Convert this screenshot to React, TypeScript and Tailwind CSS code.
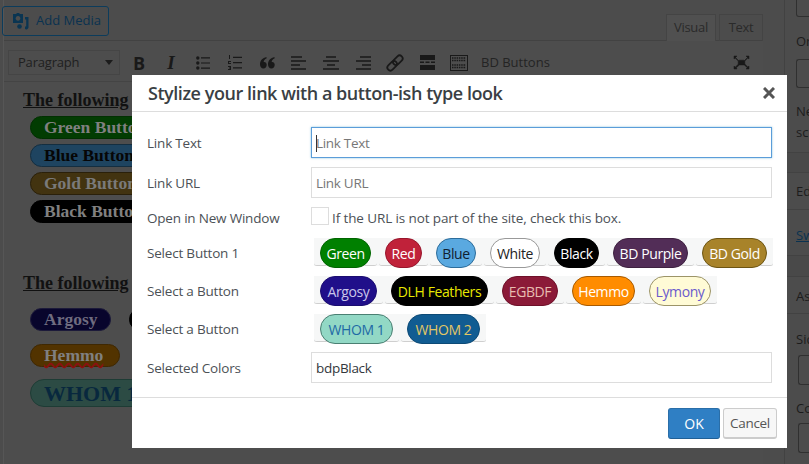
import React from "react";

const ui = "font-['Open_Sans','Noto_Sans',sans-serif]";
const serif = "font-['Liberation_Serif',serif]";

const Pill = ({ text, cls, w }: { text: string; cls: string; w: string }) => (
  <span className={`flex h-[30px] shrink-0 items-center justify-center rounded-[15px] border text-[14px] tracking-[-0.4px] ${cls} ${w}`}>{text}</span>
);

const Wrap = ({ children }: { children: React.ReactNode }) => (
  <span className="flex h-[28px] items-start rounded-b-[3px] border-b border-[#cfcfcf] px-[6px]">{children}</span>
);

const BackPill = ({ text, cls, w, big }: { text: string; cls: string; w: string; big?: boolean }) => (
  <div className={`flex items-center whitespace-nowrap border pl-[13px] ${serif} font-bold ${big ? "h-[28px] rounded-[14px] text-[22px]" : "h-[23px] rounded-[12px] text-[17.5px]"} ${cls} ${w}`}>{text}</div>
);

const Icon = ({ children }: { children: React.ReactNode }) => (
  <span className="flex h-5 w-8 items-center justify-center text-[#191919]">{children}</span>
);

const Row = ({ label, children, h, nudge }: { label: string; children: React.ReactNode; h: string; nudge?: boolean }) => (
  <div className={`flex items-center ${h}`}>
    <span className={`w-[164px] shrink-0 whitespace-nowrap text-[13.5px] tracking-[-0.2px] text-[#4c5156] ${nudge ? "pt-[2px]" : ""}`}>{label}</span>
    {children}
  </div>
);

const ButtonRow = ({ children }: { children: React.ReactNode }) => (
  <div className="ml-[3px] flex h-[28px] gap-[2px] self-start bg-[#f6f7f7]">{children}</div>
);

function SideLabel({ t, cls = "" }: { t: string; cls?: string }) {
  return <div className={`text-[13px] text-[#1c1c1c] ${cls}`}>{t}</div>;
}

const Align = ({ d }: { d: string }) => (
  <svg width="16" height="14" viewBox="0 0 16 14" stroke="currentColor" strokeWidth="1.6" fill="none">
    <path d={d} />
  </svg>
);

export default function App() {
  return (
    <div className={`relative flex h-[464px] w-[809px] overflow-hidden bg-[#4c4c4c] ${ui}`}>
      {/* page beneath */}
      <div className="ml-[3px] flex w-[760px] shrink-0 flex-col border-l border-[#565656]">
        <div className="flex h-[41px] items-start justify-between border-b border-[#424242]">
          <button className="-ml-[2px] mt-[6px] flex h-[30px] w-[107px] items-center gap-[7px] rounded-[3px] border border-[#0c3c5c] pl-[10px] text-[13px] text-[#0a3250]">
            <svg width="16" height="17" viewBox="0 0 16 17" fill="#0a3552">
              <path d="M0 1h3l1-1h2l1 1h3v9H0zM5 3a2.4 2.4 0 1 0 .01 0z" fillRule="evenodd" />
              <circle cx="6.5" cy="13.5" r="2.3" />
              <path d="M12 4h3.500v10.500a2.300 2.300 0 0 1-3.500 1.500v-2.500h1.200V6.500H12z" />
            </svg>
            Add Media
          </button>
          <div className="mt-[14px] flex h-[27px] text-[13px] tracking-[-0.3px] text-[#2a2a2a]">
            <span className="flex w-[50px] items-center justify-center border-x border-t border-[#444] bg-[#505050]">Visual</span>
            <span className="ml-[3px] flex w-[44px] items-center justify-center border-x border-t border-[#444]">Text</span>
          </div>
        </div>
        <div className="flex h-[41px] items-center border-b border-[#444] bg-[#4d4d4d] pl-[4px] pt-[3px]">
          <div className="flex h-[25px] w-[112px] items-center justify-between border border-[#454545] pl-[9px] pr-[6px] text-[13px] tracking-[-0.2px] text-[#202020]">
            Paragraph
            <span className="h-0 w-0 border-x-[4px] border-t-[5px] border-x-transparent border-t-[#1c1c1c]" />
          </div>
          <div className="ml-[3px] flex items-center">
            <Icon><span className="text-[18px] font-bold leading-none">B</span></Icon>
            <Icon><span className={`${serif} text-[19px] font-bold italic leading-none`}>I</span></Icon>
            <Icon>
              <svg width="14" height="14" viewBox="0 0 14 14" fill="currentColor">
                <circle cx="1.800" cy="2" r="1.700" /><circle cx="1.800" cy="7" r="1.700" /><circle cx="1.800" cy="12" r="1.700" />
                <path d="M5 1.300h9v1.200H5zM5 6.400h9v1.200H5zM5 11.500h9v1.200H5z" />
              </svg>
            </Icon>
            <Icon>
              <svg width="14" height="15" viewBox="0 0 14 15" fill="currentColor">
                <path d="M1 0h1v4H1zM0 6h3v1H1v1h2v1H0zM0 11h3v4H0v-1h2v-.5H1v-1h1V12H0z" />
                <path d="M5 1.800h9V3H5zM5 7h9v1.200H5zM5 12.300h9v1.200H5z" />
              </svg>
            </Icon>
            <Icon>
              <svg width="15" height="12" viewBox="0 0 15 12" fill="currentColor">
                <path d="M6.500 0v1.600C4.700 2.300 3.800 3.500 3.700 5c1.700-.3 3 .9 3 2.800C6.700 10 5.300 11.500 3.400 11.500 1.300 11.500 0 9.800 0 7.500 0 3.600 2.600.8 6.500 0z" />
                <path d="M14.500 0v1.600c-1.800.7-2.700 1.900-2.800 3.400 1.700-.3 3 .9 3 2.800 0 2.200-1.400 3.700-3.300 3.700C9.300 11.500 8 9.800 8 7.500 8 3.600 10.600.8 14.500 0z" />
              </svg>
            </Icon>
            <Icon><Align d="M0 1h11M0 5h15M0 9h9M0 13h15" /></Icon>
            <Icon><Align d="M3 1h10M0 5h16M4 9h8M0 13h16" /></Icon>
            <Icon><Align d="M5 1h11M1 5h15M7 9h9M1 13h15" /></Icon>
            <Icon>
              <svg width="18" height="18" viewBox="-9 -9 18 18" fill="none" stroke="currentColor" strokeWidth="1.800">
                <g transform="rotate(-45)">
                  <rect x="-9.500" y="-3" width="11" height="6" rx="3" />
                  <rect x="-1.500" y="-3" width="11" height="6" rx="3" />
                </g>
              </svg>
            </Icon>
            <Icon>
              <svg width="15" height="15" viewBox="0 0 15 15" fill="currentColor">
                <path d="M0 0h15v5H0zM0 6.500h4v1.500H0zM5.500 6.500h4v1.500h-4zM11 6.500h4v1.500h-4zM0 10h15v5H0z" />
              </svg>
            </Icon>
            <Icon>
              <svg width="18" height="16" viewBox="0 0 18 16" fill="none" stroke="currentColor">
                <rect x=".5" y=".5" width="17" height="15" />
                <path d="M2 3h14M2 5.500h14M2 10h14M2 12.500h14" strokeDasharray="1.500 .8" strokeWidth="1.300" />
              </svg>
            </Icon>
            <span className="ml-[6px] text-[13px] text-[#242424]">BD Buttons</span>
          </div>
          <span className="ml-auto mr-[6px] flex w-8 justify-center text-[#191919]">
            <svg width="17" height="15" viewBox="0 0 17 15" fill="currentColor" stroke="currentColor">
              <path d="M1 1h3L2.500 2.500l3 3 1-.3h4l1 .3 3-3L13 1h3v3l-1.200-1-3 3v3l3 3L16 11v3h-3l1.300-1.300-3-2.700h-5l-3 2.700L4 14H1v-3l1.200 1.200 3-3V6l-3-3L1 4z" strokeWidth=".5" />
            </svg>
          </span>
        </div>
        <div className="flex flex-1 flex-col bg-[#4d4d4d] pl-[19px] text-[#111]">
          <div className={`mt-[5px] ${serif} text-[18px] font-bold leading-[26px] underline`}>The following</div>
          <div className="ml-[7px] mt-[3px] flex flex-col gap-[5px]">
            <BackPill text="Green Button" cls="border-[#013001] bg-[#023c02] text-[#808080]" w="w-[160px]" />
            <BackPill text="Blue Button" cls="border-[#142e40] bg-[#1e4460] text-[#060606]" w="w-[160px]" />
            <BackPill text="Gold Button" cls="border-[#2a200a] bg-[#423310] text-[#7a7a7a]" w="w-[160px]" />
            <BackPill text="Black Button" cls="border-black bg-black text-[#808080]" w="w-[160px]" />
          </div>
          <div className={`mt-[47px] ${serif} text-[18px] font-bold leading-[26px] underline`}>The following</div>
          <div className="ml-[7px] mt-[12px] flex gap-[18px]">
            <BackPill text="Argosy" cls="border-[#1c1a3a] bg-[#08052c] text-[#6f6c80]" w="w-[81px]" />
            <BackPill text="" cls="border-black bg-black" w="w-[60px]" />
          </div>
          <div className="ml-[7px] mt-[13px]">
            <BackPill text="Hemmo" cls="border-[#3f2802] bg-[#523300] text-[#808080] underline decoration-wavy decoration-[#8c1010]" w="w-[90px]" />
          </div>
          <div className="ml-[7px] mt-[12px]">
            <BackPill big text="WHOM 1" cls="border-[#1e3c35] bg-[#2c4b44] text-[#08283e]" w="w-[160px]" />
          </div>
        </div>
      </div>
      <div className="ml-[21px] flex flex-1 flex-col border-l border-[#424242] pl-[11px]">
        <div className="h-[17px] w-full rounded-b-[3px] border border-t-0 border-[#303030]" />
        <SideLabel t="Or" cls="mt-[15px]" />
        <div className="mt-[7px] h-[29px] rounded-l-[3px] border border-r-0 border-[#303030]" />
        <SideLabel t="Ne" cls="mt-[14px]" />
        <SideLabel t="sc" cls="mt-[2px]" />
      </div>
      <div className="absolute right-0 top-[152px] flex w-[24px] flex-col">
        <div className="h-[21px] border-y border-[#424242] bg-[#494949]" />
        <div className="flex h-[37px] items-center border-b border-[#424242] pl-[11px] pt-[2px] text-[13px] text-[#1c1c1c]">Ed</div>
        <div className="flex h-[45px] items-center pl-[11px] pt-[6px] text-[13px] text-[#0a3250] underline">Sw</div>
        <div className="h-[22px] border-y border-[#424242] bg-[#494949]" />
        <div className="flex h-[37px] items-center border-b border-[#424242] pl-[11px] pt-[4px] text-[13px] text-[#1c1c1c]">As</div>
        <div className="mt-[16px] pl-[11px] text-[13px] text-[#1c1c1c]">Sid</div>
        <div className="ml-[13px] mt-[5px] h-[30px] rounded-l-[3px] border border-r-0 border-[#303030]" />
        <div className="mt-[14px] pl-[11px] text-[13px] text-[#1c1c1c]">Co</div>
        <div className="ml-[13px] mt-[5px] h-[30px] rounded-l-[3px] border border-r-0 border-[#303030]" />
      </div>

      {/* modal */}
      <div className="absolute left-[132px] top-[75px] flex h-[373px] w-[655px] flex-col bg-white">
        <div className="flex h-[37px] items-center justify-between border-b border-[#dddddd] pl-[16px] pr-[12px]">
          <span className="pt-[1px] text-[18px] font-semibold tracking-[-0.45px] text-[#3a3f44]">Stylize your link with a button-ish type look</span>
          <svg width="12" height="12" viewBox="0 0 12 12" stroke="#555" strokeWidth="3"><path d="M1 1l10 10M11 1L1 11" /></svg>
        </div>
        <div className="flex flex-1 flex-col px-[15px] pt-[15px]">
          <Row nudge label="Link Text" h="h-[31px]">
            <div className="flex h-[31px] flex-1 items-center border border-[#5b9dd9] pl-[4px] pt-[2px] text-[13.5px] tracking-[-0.3px] text-[#777] shadow-[0_0_2px_rgba(30,140,190,0.5)]">
              <span className="mr-[-1px] h-[17px] w-px bg-[#333]" />Link Text
            </div>
          </Row>
          <Row nudge label="Link URL" h="mt-[9px] h-[31px]">
            <div className="flex h-[31px] flex-1 items-center border border-[#ddd] pl-[4px] pt-[2px] text-[13.5px] tracking-[-0.3px] text-[#777]">Link URL</div>
          </Row>
          <Row nudge label="Open in New Window" h="mt-[9px] h-[20px]">
            <span className="h-[18px] w-[18px] self-start border border-[#ddd]" />
            <span className="ml-[3px] whitespace-nowrap pt-[3px] text-[13.5px] tracking-[-0.11px] text-[#4c5156]">If the URL is not part of the site, check this box.</span>
          </Row>
          <Row label="Select Button 1" h="mt-[11px] h-[31px]">
            <ButtonRow>
              <Wrap><Pill text="Green" w="w-[51px]" cls="border-[#006400] bg-[#008000] text-white" /></Wrap>
              <Wrap><Pill text="Red" w="w-[37px]" cls="border-[#98162c] bg-[#c0223a] text-white" /></Wrap>
              <Wrap><Pill text="Blue" w="w-[40px]" cls="border-[#2d6d9b] bg-[#5aa9e0] text-[#102030]" /></Wrap>
              <Wrap><Pill text="White" w="w-[50px]" cls="border-[#999] bg-white text-[#222]" /></Wrap>
              <Wrap><Pill text="Black" w="w-[45px]" cls="border-black bg-black text-white" /></Wrap>
              <Wrap><Pill text="BD Purple" w="w-[75px]" cls="border-[#3e2140] bg-[#522d57] text-white" /></Wrap>
              <Wrap><Pill text="BD Gold" w="w-[65px]" cls="border-[#6d5513] bg-[#a8832a] text-white" /></Wrap>
            </ButtonRow>
          </Row>
          <Row label="Select a Button" h="mt-[7px] h-[31px]">
            <ButtonRow>
              <Wrap><Pill text="Argosy" w="w-[57px]" cls="border-[#1b0d70] bg-[#200f8a] text-[#c9c5ea]" /></Wrap>
              <Wrap><Pill text="DLH Feathers" w="w-[97px]" cls="border-black bg-black text-[#e8e800]" /></Wrap>
              <Wrap><Pill text="EGBDF" w="w-[56px]" cls="border-[#6e1029] bg-[#8b1a38] text-[#e8bcb0]" /></Wrap>
              <Wrap><Pill text="Hemmo" w="w-[63px]" cls="border-[#a85a00] bg-[#ff8c00] text-white" /></Wrap>
              <Wrap><Pill text="Lymony" w="w-[62px]" cls="border-[#9c9468] bg-[#fffbd6] text-[#6a5acd]" /></Wrap>
            </ButtonRow>
          </Row>
          <Row label="Select a Button" h="mt-[7px] h-[31px]">
            <ButtonRow>
              <Wrap><Pill text="WHOM 1" w="w-[73px]" cls="border-[#4a7f72] bg-[#92d8c5] text-[#1f6aa5]" /></Wrap>
              <Wrap><Pill text="WHOM 2" w="w-[73px]" cls="border-[#0d4a76] bg-[#115c92] text-[#e3c765]" /></Wrap>
            </ButtonRow>
          </Row>
          <Row nudge label="Selected Colors" h="mt-[7px] h-[31px]">
            <div className="flex h-[31px] flex-1 items-center border border-[#ddd] pl-[4px] pt-[2px] text-[13.5px] tracking-[-0.3px] text-[#32373c]">bdpBlack</div>
          </Row>
        </div>
        <div className="flex h-[51px] items-start justify-end gap-[3px] border-t border-[#dddddd] pr-[10px] pt-[10px]">
          <button className="h-[31px] w-[52px] rounded-[3px] border border-[#2a6ea8] border-b-[#1f5f96] bg-[#2f7fc4] text-[14px] text-white">OK</button>
          <button className="h-[31px] w-[54px] rounded-[3px] border border-[#ccc] border-b-2 bg-[#f7f7f7] text-[13.5px] tracking-[-0.3px] text-[#555]">Cancel</button>
        </div>
      </div>
    </div>
  );
}
